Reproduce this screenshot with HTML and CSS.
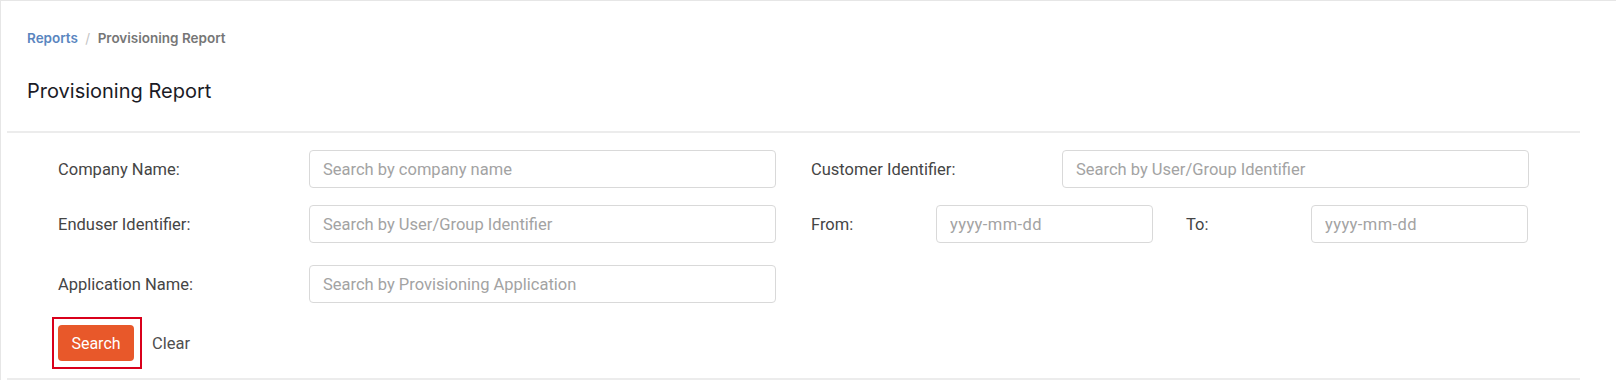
FILE: index.html
```html
<!DOCTYPE html>
<html lang="en">
<head>
  <meta charset="UTF-8">
  <title>Provisioning Report</title>
  <link rel="stylesheet" href="styles.css">
</head>
<body>
  <div class="card">
    <div class="page-head">
      <div class="breadcrumb">
        <a href="#" class="crumb-link">Reports</a>
        <span class="crumb-sep">/</span>
        <span class="crumb-current">Provisioning Report</span>
      </div>
      <h1 class="page-title">Provisioning Report</h1>
    </div>
    <div class="divider"></div>

    <form class="filters">
      <div class="row">
        <div class="field">
          <label>Company Name:</label>
          <input type="text" placeholder="Search by company name">
        </div>
        <div class="field">
          <label>Customer Identifier:</label>
          <input type="text" placeholder="Search by User/Group Identifier">
        </div>
      </div>

      <div class="row">
        <div class="field">
          <label>Enduser Identifier:</label>
          <input type="text" placeholder="Search by User/Group Identifier">
        </div>
        <div class="field-pair">
          <div class="field small">
            <label>From:</label>
            <input type="text" class="date" placeholder="yyyy-mm-dd">
          </div>
          <div class="field small">
            <label>To:</label>
            <input type="text" class="date" placeholder="yyyy-mm-dd">
          </div>
        </div>
      </div>

      <div class="row row-wide">
        <div class="field">
          <label>Application Name:</label>
          <input type="text" placeholder="Search by Provisioning Application">
        </div>
      </div>

      <div class="actions">
        <button type="button" class="btn-search">Search</button>
        <button type="button" class="btn-clear">Clear</button>
      </div>
    </form>
    <div class="divider bottom"></div>
  </div>
</body>
</html>
```

FILE: styles.css
```css
html, body {
  margin: 0;
  padding: 0;
  background: #fff;
}
.card {
  border-top: 1px solid #e6e6e6;
  border-left: 1px solid #e6e6e6;
  min-height: 380px;
  box-sizing: border-box;
}
.page-head {
  padding: 27px 0 0 26px;
  font-family: Inter, "Noto Sans", sans-serif;
}
.breadcrumb {
  font-size: 13.5px;
  line-height: 21px;
  font-weight: 600;
}
.crumb-link {
  color: #5a86bf;
  text-decoration: none;
}
.crumb-sep {
  color: #c4c4c4;
  font-weight: 400;
  margin: 0 4px;
}
.crumb-current {
  color: #767676;
}
.page-title {
  margin: 28px 0 0;
  font-size: 20px;
  line-height: 28px;
  font-weight: 400;
  color: #1b1b26;
}
.divider {
  height: 2px;
  background: #ececec;
  margin: 26px 36px 0 6px;
}
.divider.bottom {
  margin-top: 17px;
}
.filters {
  padding: 17px 0 0 57px;
  font-family: Roboto, "Liberation Sans", sans-serif;
}
.row {
  display: flex;
  gap: 35px;
  margin-bottom: 17px;
}
.row-wide {
  margin-top: 22px;
  margin-bottom: 22px;
}
.field {
  display: flex;
  align-items: center;
  width: 718px;
}
.field label {
  width: 251px;
  flex: none;
  font-size: 16.5px;
  color: #454545;
}
.field input {
  width: 467px;
  height: 38px;
  box-sizing: border-box;
  border: 1px solid #d9d9d9;
  border-radius: 4px;
  padding: 0 13px;
  font-family: Roboto, "Liberation Sans", sans-serif;
  font-size: 16.5px;
  color: #333;
  outline: none;
}
.field input::placeholder {
  color: #a3a3a3;
}
.field input.date {
  letter-spacing: 0.4px;
}
.field-pair {
  display: flex;
  gap: 33px;
  width: 718px;
}
.field.small {
  width: 342px;
}
.field.small label {
  width: 125px;
}
.field.small input {
  width: 217px;
}
.actions {
  display: flex;
  align-items: center;
  gap: 18px;
}
.btn-search {
  position: relative;
  width: 76px;
  height: 36px;
  border: none;
  border-radius: 4px;
  background: #e8582a;
  color: #fff;
  font-family: Roboto, "Liberation Sans", sans-serif;
  font-size: 16px;
}
/* annotation box round the search button */
.btn-search::after {
  content: "";
  position: absolute;
  top: -8px;
  bottom: -8px;
  left: -6px;
  right: -8px;
  border: 2px solid #d9001b;
}
.btn-clear {
  border: none;
  background: none;
  padding: 0;
  color: #4f4f4f;
  font-family: Roboto, "Liberation Sans", sans-serif;
  font-size: 16.5px;
}
```
